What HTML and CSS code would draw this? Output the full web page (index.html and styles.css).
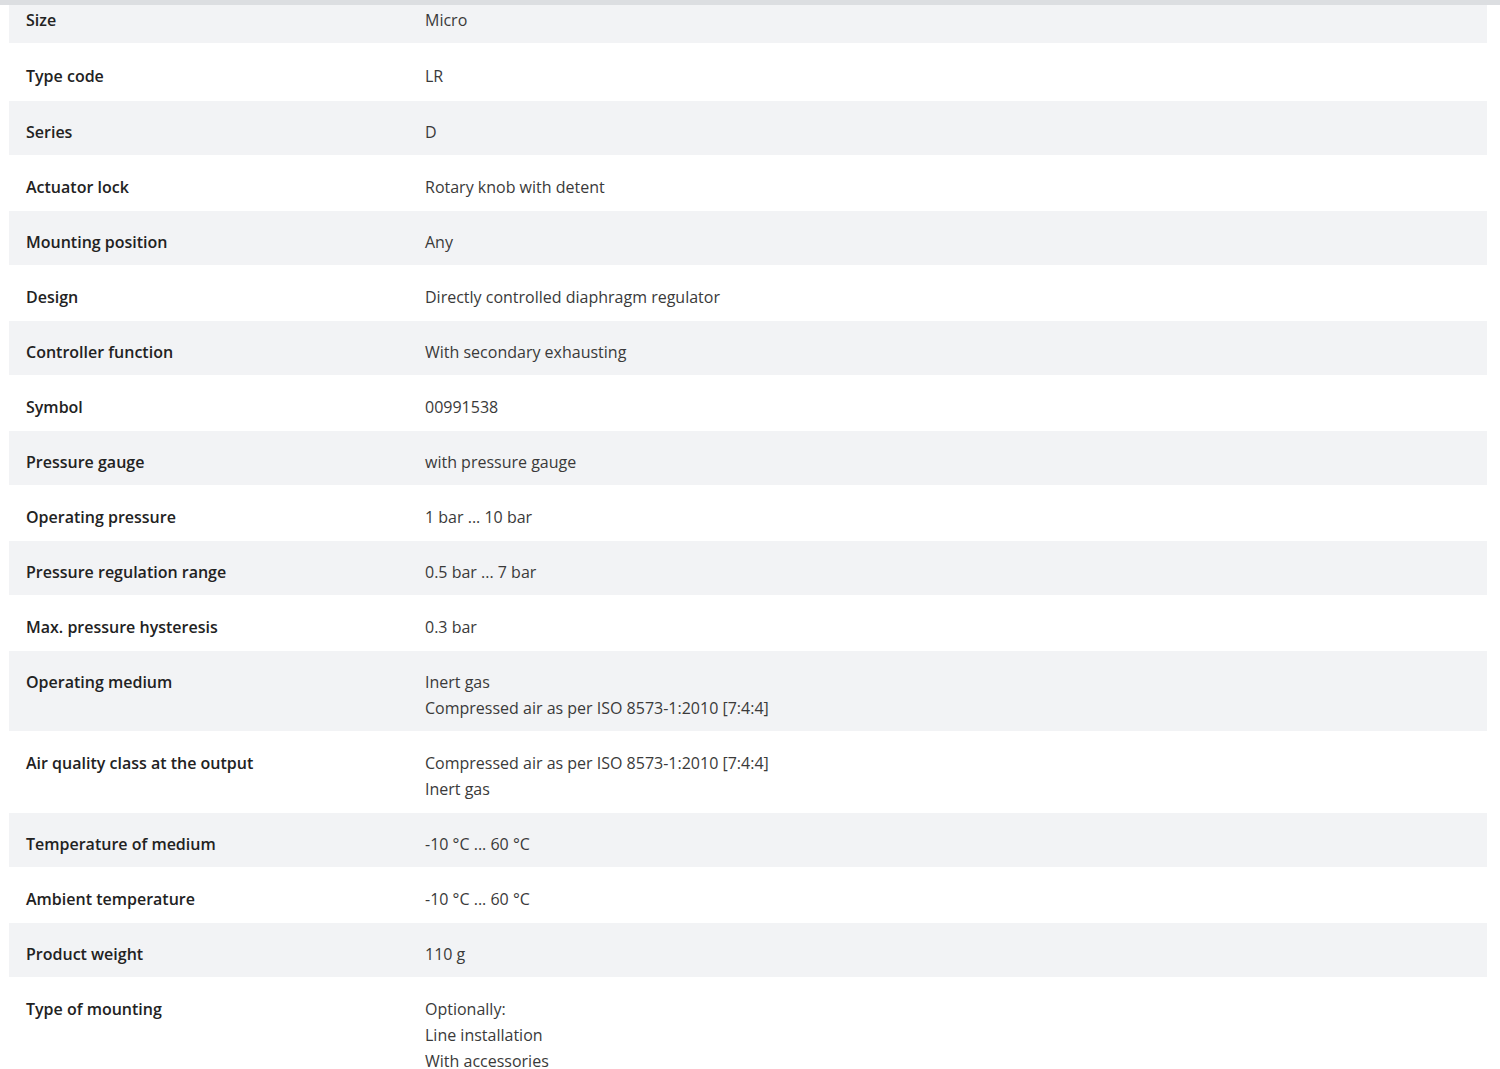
FILE: index.html
```html
<!DOCTYPE html>
<html>
<head>
<meta charset="utf-8">
<link rel="stylesheet" href="styles.css">
</head>
<body>
<div class="topbar"></div>
<div class="specs">
  <div class="row first"><div class="label">Size</div><div class="value">Micro</div></div>
  <div class="row"><div class="label">Type code</div><div class="value">LR</div></div>
  <div class="row"><div class="label">Series</div><div class="value">D</div></div>
  <div class="row"><div class="label">Actuator lock</div><div class="value">Rotary knob with detent</div></div>
  <div class="row"><div class="label">Mounting position</div><div class="value">Any</div></div>
  <div class="row"><div class="label">Design</div><div class="value">Directly controlled diaphragm regulator</div></div>
  <div class="row"><div class="label">Controller function</div><div class="value">With secondary exhausting</div></div>
  <div class="row"><div class="label">Symbol</div><div class="value">00991538</div></div>
  <div class="row"><div class="label">Pressure gauge</div><div class="value">with pressure gauge</div></div>
  <div class="row"><div class="label">Operating pressure</div><div class="value">1 bar ... 10 bar</div></div>
  <div class="row"><div class="label">Pressure regulation range</div><div class="value">0.5 bar ... 7 bar</div></div>
  <div class="row"><div class="label">Max. pressure hysteresis</div><div class="value">0.3 bar</div></div>
  <div class="row"><div class="label">Operating medium</div><div class="value">Inert gas<br>Compressed air as per ISO 8573-1:2010 [7:4:4]</div></div>
  <div class="row"><div class="label">Air quality class at the output</div><div class="value">Compressed air as per ISO 8573-1:2010 [7:4:4]<br>Inert gas</div></div>
  <div class="row"><div class="label">Temperature of medium</div><div class="value">-10 °C ... 60 °C</div></div>
  <div class="row"><div class="label">Ambient temperature</div><div class="value">-10 °C ... 60 °C</div></div>
  <div class="row"><div class="label">Product weight</div><div class="value">110 g</div></div>
  <div class="row"><div class="label">Type of mounting</div><div class="value">Optionally:<br>Line installation<br>With accessories</div></div>
</div>
</body>
</html>
```
FILE: styles.css
```css
html, body {
  margin: 0;
  padding: 0;
  background: #ffffff;
}
body {
  font-family: "Open Sans", "Noto Sans", sans-serif;
  color: #333333;
  font-size: 16px;
}
.topbar {
  height: 5px;
  background: #dcdee1;
}
.specs {
  margin: 0 13px 0 9px;
}
.row {
  display: grid;
  grid-template-columns: 399px 1fr;
  padding: 18px 0 10px;
  line-height: 26px;
}
.row:nth-child(odd) {
  background: #f2f3f5;
}
.row:nth-child(even) {
  padding-top: 19px;
  padding-bottom: 11px;
}
.row:nth-child(2) {
  padding-top: 20px;
  padding-bottom: 12px;
}
.row.first {
  padding-top: 2px;
  padding-bottom: 10px;
}
.label {
  padding-left: 17px;
  font-weight: 600;
  color: #222222;
  line-height: 20px;
  padding-top: 3px;
}
.value {
  padding-left: 17px;
  color: #3a3a3a;
}
```
